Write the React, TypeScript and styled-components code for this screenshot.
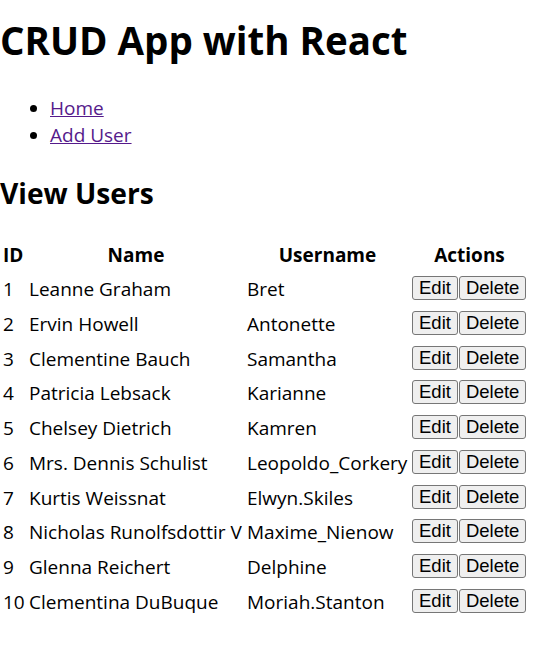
import React from "react";
import styled, { createGlobalStyle } from "styled-components";

const Global = createGlobalStyle`
  html, body { margin: 0; padding: 0; background: #fff; }
  body { font-family: "Open Sans", "Noto Sans", sans-serif; font-size: 19px; color: #000; }
`;

const Page = styled.div`
  display: block;
`;

const Title = styled.h1`
  font-size: 38.5px;
  font-weight: 700;
  line-height: 53px;
  margin: 14px 0 0;
`;

const Nav = styled.ul`
  margin: 28px 0 0;
  padding-left: 50px;
  line-height: 27px;
  list-style: disc;
`;

const NavLink = styled.a`
  color: #551a8b;
  text-decoration: underline;
`;

const Subtitle = styled.h2`
  font-size: 28.2px;
  font-weight: 700;
  line-height: 40px;
  margin: 24px 0 0;
`;

const Table = styled.table`
  margin-top: 24px;
  border-spacing: 2px;
  table-layout: fixed;
  width: 530px;
`;

const Th = styled.th<{ $w: number }>`
  width: ${(p) => p.$w}px;
  padding: 1px;
  font-weight: 700;
  text-align: center;
  line-height: 30px;
  white-space: nowrap;
`;

const IdTh = styled(Th)`
  text-align: left;
`;

const Td = styled.td`
  padding: 1px;
  line-height: 30.78px;
  white-space: nowrap;
  vertical-align: middle;
`;

const Button = styled.button`
  font-family: "Liberation Sans", Arial, sans-serif;
  font-size: 18.5px;
  line-height: 20px;
  padding: 1px 6px;
  margin: 0;
  background: #efefef;
  color: #000;
  border: 1px solid #767676;
  border-radius: 3px;
  vertical-align: 2px;
  & + & { margin-left: 1px; }
`;

const users = [
  [1, "Leanne Graham", "Bret"],
  [2, "Ervin Howell", "Antonette"],
  [3, "Clementine Bauch", "Samantha"],
  [4, "Patricia Lebsack", "Karianne"],
  [5, "Chelsey Dietrich", "Kamren"],
  [6, "Mrs. Dennis Schulist", "Leopoldo_Corkery"],
  [7, "Kurtis Weissnat", "Elwyn.Skiles"],
  [8, "Nicholas Runolfsdottir V", "Maxime_Nienow"],
  [9, "Glenna Reichert", "Delphine"],
  [10, "Clementina DuBuque", "Moriah.Stanton"],
] as const;

export default function App() {
  return (
    <Page>
      <Global />
      <Title>CRUD App with React</Title>
      <Nav>
        <li><NavLink href="#">Home</NavLink></li>
        <li><NavLink href="#">Add User</NavLink></li>
      </Nav>
      <Subtitle>View Users</Subtitle>
      <Table>
        <thead>
          <tr>
            <IdTh $w={22}>ID</IdTh>
            <Th $w={214}>Name</Th>
            <Th $w={161}>Username</Th>
            <Th $w={115}>Actions</Th>
          </tr>
        </thead>
        <tbody>
          {users.map(([id, name, uname]) => (
            <tr key={id}>
              <Td>{id}</Td>
              <Td>{name}</Td>
              <Td>{uname}</Td>
              <Td>
                <Button>Edit</Button>
                <Button>Delete</Button>
              </Td>
            </tr>
          ))}
        </tbody>
      </Table>
    </Page>
  );
}
